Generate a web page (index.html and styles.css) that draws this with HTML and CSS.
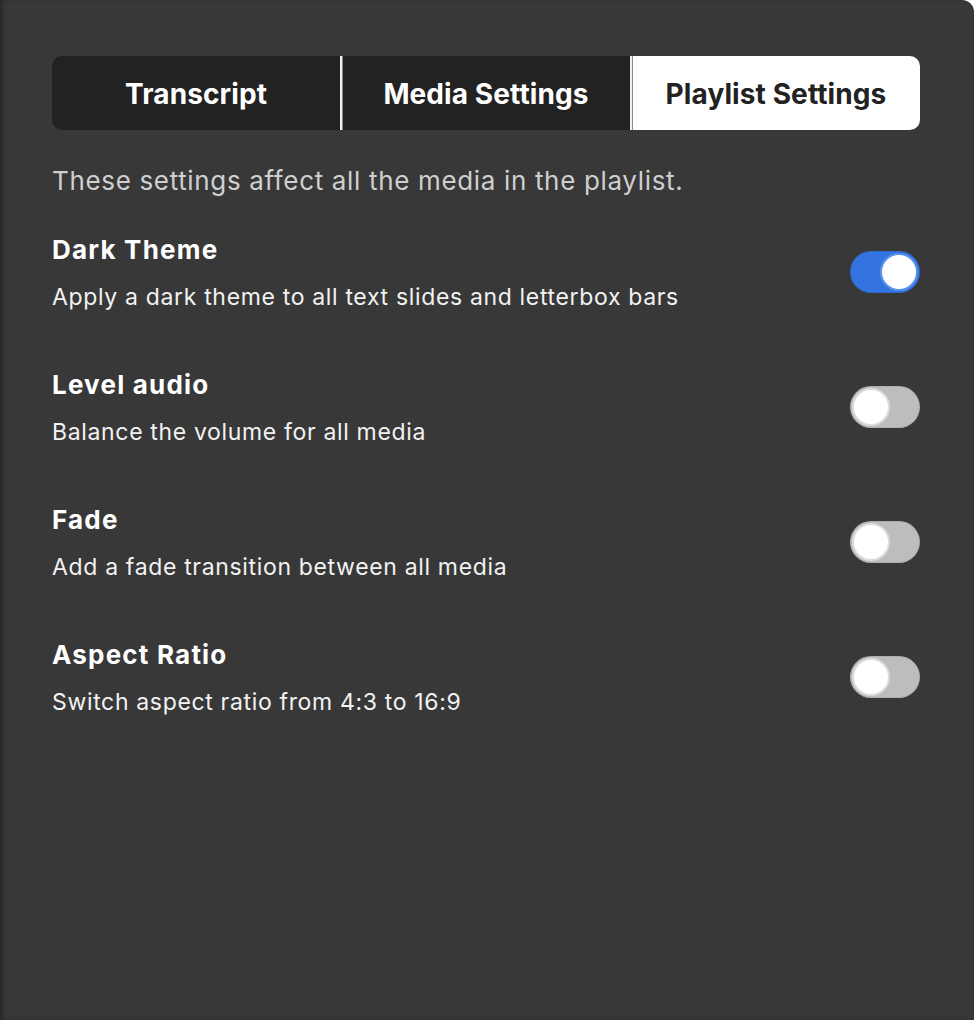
FILE: index.html
```html
<!DOCTYPE html>
<html lang="en">
<head>
<meta charset="utf-8">
<title>Playlist Settings</title>
<link rel="stylesheet" href="styles.css">
</head>
<body>
<div class="panel">
  <div class="tabs">
    <div class="tab">Transcript</div>
    <div class="tab">Media Settings</div>
    <div class="tab active">Playlist Settings</div>
  </div>
  <p class="intro">These settings affect all the media in the playlist.</p>
  <div class="settings">
    <div class="row">
      <div class="text">
        <div class="title">Dark Theme</div>
        <div class="desc">Apply a dark theme to all text slides and letterbox bars</div>
      </div>
      <div class="toggle on"><span class="knob"></span></div>
    </div>
    <div class="row">
      <div class="text">
        <div class="title">Level audio</div>
        <div class="desc">Balance the volume for all media</div>
      </div>
      <div class="toggle"><span class="knob"></span></div>
    </div>
    <div class="row">
      <div class="text">
        <div class="title">Fade</div>
        <div class="desc">Add a fade transition between all media</div>
      </div>
      <div class="toggle"><span class="knob"></span></div>
    </div>
    <div class="row">
      <div class="text">
        <div class="title">Aspect Ratio</div>
        <div class="desc">Switch aspect ratio from 4:3 to 16:9</div>
      </div>
      <div class="toggle"><span class="knob"></span></div>
    </div>
  </div>
</div>
</body>
</html>
```
FILE: styles.css
```css
html, body {
  margin: 0;
  padding: 0;
  background: #ffffff;
}
body {
  font-family: Inter, "Noto Sans", "Liberation Sans", sans-serif;
}
.panel {
  box-sizing: border-box;
  width: 974px;
  height: 1020px;
  background: #383838;
  border-top-right-radius: 12px;
  box-shadow: inset 3px 0 4px -1px rgba(0, 0, 0, 0.35);
  padding: 56px 54px 0 52px;
}
.tabs {
  display: flex;
  height: 74px;
  border-radius: 10px;
  overflow: hidden;
  background: #222222;
}
.tab {
  flex: 1;
  display: flex;
  align-items: center;
  justify-content: center;
  padding-top: 2px;
  color: #ffffff;
  font-size: 28px;
  font-weight: 700;
  letter-spacing: 0.1px;
}
.tab + .tab {
  border-left: 2px solid #f2f2f2;
  box-shadow: inset 1px 0 0 #8a8a8a;
}
.tab.active {
  background: #ffffff;
  color: #222222;
}
.intro {
  margin: 35px 0 0;
  line-height: 32px;
  font-size: 26px;
  letter-spacing: 0.66px;
  color: #cfcfcf;
}
.settings {
  margin-top: 37px;
  display: flex;
  flex-direction: column;
  gap: 56px;
}
.row {
  display: flex;
  align-items: center;
  justify-content: space-between;
}
.text {
  display: flex;
  flex-direction: column;
  gap: 15px;
}
.title {
  font-size: 26px;
  font-weight: 700;
  line-height: 32px;
  letter-spacing: 1.2px;
  color: #ffffff;
}
.desc {
  font-size: 23px;
  line-height: 32px;
  letter-spacing: 0.66px;
  color: #f2f2f2;
}
.toggle {
  box-sizing: border-box;
  width: 70px;
  height: 42px;
  margin-bottom: 4px;
  border-radius: 21px;
  background: #bdbdbd;
  padding: 2px;
  display: flex;
  justify-content: flex-start;
  box-shadow: inset 0 0 0 1px rgba(0, 0, 0, 0.08);
}
.knob {
  box-sizing: border-box;
  width: 38px;
  height: 38px;
  border-radius: 50%;
  background: #ffffff;
  border: 2px solid #dcdcdc;
}
.toggle.on {
  background: #3374e0;
  justify-content: flex-end;
}
.toggle.on .knob {
  border-color: #5b93ec;
}
```
